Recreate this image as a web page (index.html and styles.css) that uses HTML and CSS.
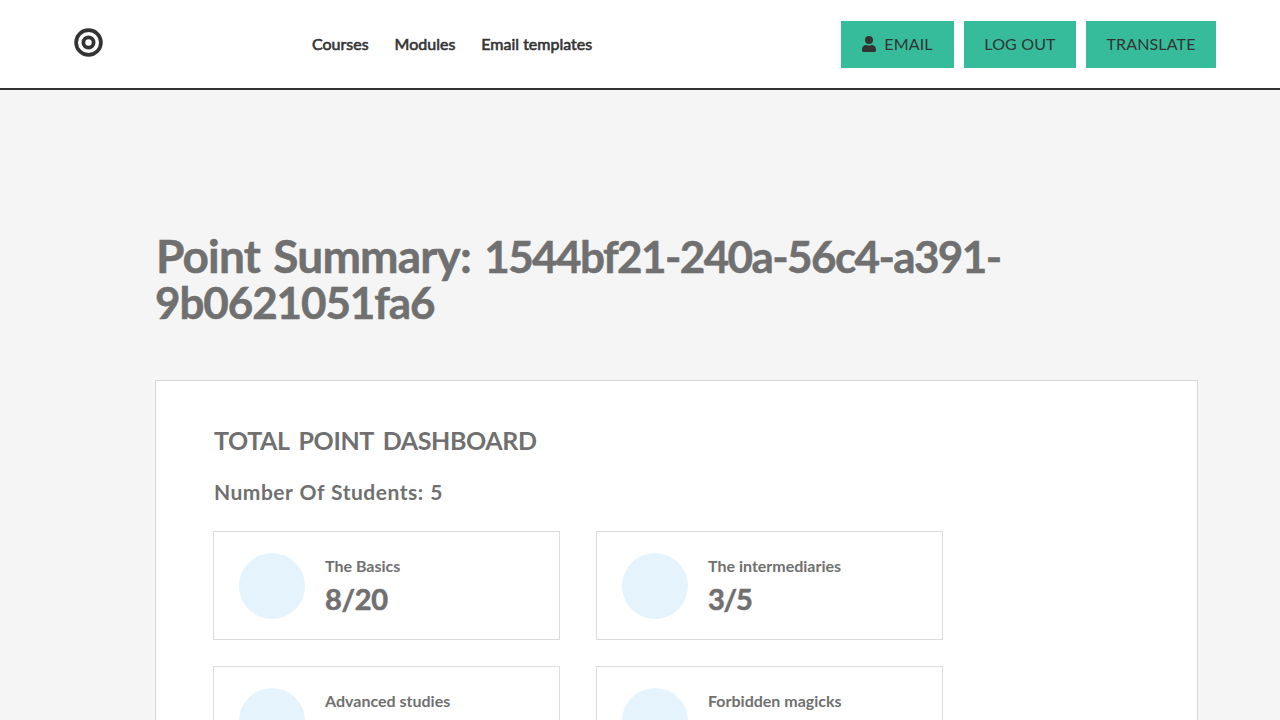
FILE: index.html
```html
<!DOCTYPE html>
<html lang="en">
<head>
<meta charset="utf-8">
<title>Point Summary</title>
<link rel="stylesheet" href="styles.css">
</head>
<body>
<header class="topbar">
  <a class="logo" aria-label="Home"><svg width="29" height="29" viewBox="0 0 29 29" fill="none" stroke="#333"><circle cx="14.5" cy="14.5" r="12.4" stroke-width="3.7"/><circle cx="14.5" cy="14.5" r="5.1" stroke-width="3.8"/></svg></a>
  <nav class="nav"><a>Courses</a><a>Modules</a><a>Email templates</a></nav>
  <div class="actions">
    <button class="btn btn-email"><svg class="user" width="14" height="16" viewBox="0 0 14 16" fill="#333"><circle cx="7" cy="4" r="4"/><path d="M4.2 9h.5a5.4 5.4 0 0 0 4.6 0h.5A4.2 4.2 0 0 1 14 13.2v1.3a1.5 1.5 0 0 1-1.5 1.5h-11A1.5 1.5 0 0 1 0 14.5v-1.3A4.2 4.2 0 0 1 4.2 9z"/></svg><span>EMAIL</span></button>
    <button class="btn btn-logout"><span>LOG OUT</span></button>
    <button class="btn btn-translate"><span>TRANSLATE</span></button>
  </div>
</header>
<main class="content">
  <h1 class="title"><span class="title-label">Point Summary: </span><span class="title-id">1544bf21-240a-56c4-a391-<br><span class="title-rest">9b0621051fa6</span></span></h1>
  <section class="panel">
    <h2 class="panel-title">TOTAL POINT DASHBOARD</h2>
    <h3 class="students">Number Of Students: 5</h3>
    <div class="grid">
      <article class="card"><i class="dot"></i><div><h4 class="name">The Basics</h4><p class="score">8/20</p></div></article>
      <article class="card"><i class="dot"></i><div><h4 class="name">The intermediaries</h4><p class="score score-short">3/5</p></div></article>
      <article class="card"><i class="dot"></i><div><h4 class="name">Advanced studies</h4></div></article>
      <article class="card"><i class="dot"></i><div><h4 class="name">Forbidden magicks</h4></div></article>
    </div>
  </section>
</main>
</body>
</html>
```
FILE: styles.css
```css
* { box-sizing: border-box; }
body { margin: 0; height: 720px; overflow: hidden; background: #f5f5f5; font-family: Lato, sans-serif; color: #707070; display: flex; flex-direction: column; }
h1, h2, h3, h4, p { margin: 0; }
.topbar { flex: none; height: 90px; background: #fff; border-bottom: 2px solid #333; display: flex; align-items: center; padding: 0 64px 0 74px; color: #333; }
.logo { display: flex; width: 238px; padding-bottom: 3px; }
.nav { display: flex; gap: 26px; font-size: 16px; line-height: 20px; font-weight: 400; -webkit-text-stroke: 0.6px #333; }
.actions { display: flex; gap: 10px; margin-left: auto; }
.btn { height: 47px; border: 0; padding: 0; background: #37bc9b; color: #333; font: 400 16px/20px Lato, sans-serif; display: flex; align-items: center; justify-content: center; gap: 8px; letter-spacing: 0.15px; }
.btn-email { width: 113px; }
.btn-logout { width: 112px; }
.btn-translate { width: 130px; }
.content { flex: 1; min-height: 0; display: flex; flex-direction: column; padding: 143px 82px 0 155px; }
.title { flex: none; font-size: 46px; line-height: 45px; font-weight: 700; white-space: nowrap; height: 147px; }
.title-label { letter-spacing: -0.85px; word-spacing: 3px; padding-left: 1px; -webkit-text-stroke: 0.5px #707070; }
.title-id { font-size: 44px; letter-spacing: -1.6px; -webkit-text-stroke: 0.5px #707070; }
.title-rest { letter-spacing: -1.1px; }
.panel { flex: 1; min-height: 0; overflow: hidden; background: #fff; border: 1px solid #d8d8d8; border-bottom: 0; padding: 44px 57px 0; }
.panel-title { font-size: 25px; line-height: 30px; letter-spacing: -0.4px; word-spacing: 4px; padding-left: 1px; }
.students { margin-top: 22px; font-size: 21px; line-height: 30px; letter-spacing: 0.5px; word-spacing: 1px; padding-left: 1px; }
.grid { display: grid; grid-template-columns: 347px 347px; grid-auto-rows: 109px; gap: 26px 36px; margin-top: 24px; }
.card { border: 1px solid #dcdcdc; padding: 21px 25px; display: flex; gap: 20px; }
.dot { width: 66px; height: 66px; border-radius: 50%; background: #e5f4fc; }
.name { font-size: 16px; line-height: 20px; padding-top: 3px; }
.score { font-size: 29px; line-height: 34px; font-weight: 700; margin-top: 6px; letter-spacing: -0.3px; -webkit-text-stroke: 0.6px #707070; }
.score-short { letter-spacing: -1.2px; }
```
